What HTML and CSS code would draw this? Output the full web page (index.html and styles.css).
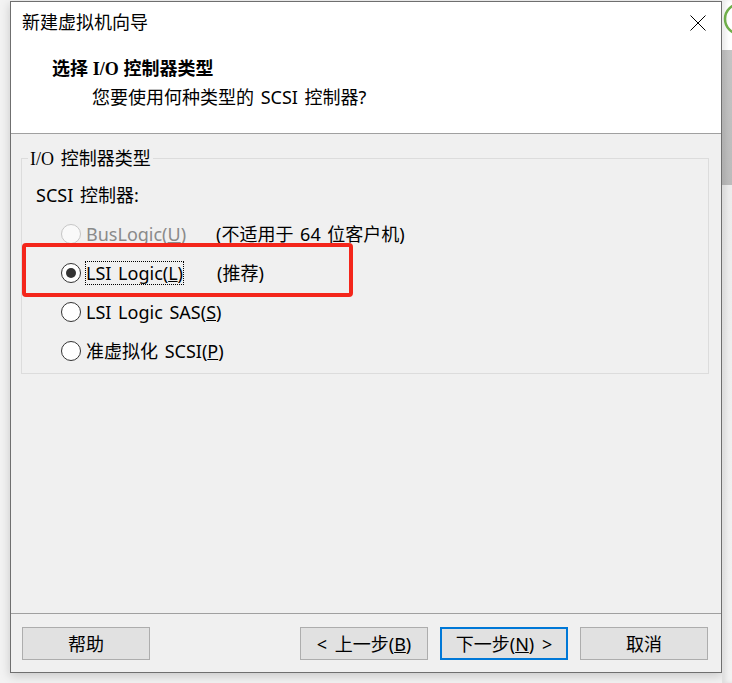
FILE: index.html
```html
<!DOCTYPE html>
<html lang="zh-CN">
<head>
<meta charset="utf-8">
<title>新建虚拟机向导</title>
<link rel="stylesheet" href="styles.css">
</head>
<body>
<div class="screen">
  <div class="gutter"></div>
  <div class="window">
    <header class="header">
      <div class="titlebar">
        <span class="title">新建虚拟机向导</span>
        <svg class="close" width="16" height="16" viewBox="0 0 16 16"><path d="M0.5 0.5 L15.5 15.5 M15.5 0.5 L0.5 15.5" stroke="#000" stroke-width="1" fill="none"/></svg>
      </div>
      <h1 class="heading">选择 <span class="serif">I/O</span> 控制器类型</h1>
      <p class="subtitle">您要使用何种类型的 SCSI 控制器?</p>
    </header>
    <main class="content">
      <fieldset class="group">
        <legend class="group-title"><span class="serif">I/O</span> 控制器类型</legend>
        <div class="group-label">SCSI 控制器:</div>
        <div class="options">
          <div class="option disabled"><span class="radio"></span><span class="opt-label">BusLogic(<u>U</u>)</span><span class="note">(不适用于 64 位客户机)</span></div>
          <div class="option"><span class="radio checked"></span><span class="opt-label focused">LSI Logic(<u>L</u>)</span><span class="note">(推荐)</span></div>
          <div class="option"><span class="radio"></span><span class="opt-label">LSI Logic SAS(<u>S</u>)</span></div>
          <div class="option"><span class="radio"></span><span class="opt-label">准虚拟化 SCSI(<u>P</u>)</span></div>
        </div>
      </fieldset>
      <div class="highlight"></div>
    </main>
    <footer class="footer">
      <button class="btn">帮助</button>
      <div class="spacer"></div>
      <div class="nav">
        <button class="btn">&lt; 上一步(<u>B</u>)</button>
        <button class="btn default">下一步(<u>N</u>) &gt;</button>
        <button class="btn">取消</button>
      </div>
    </footer>
  </div>
  <div class="side">
    <svg class="ring" width="10" height="40" viewBox="0 0 10 40"><circle cx="18" cy="19" r="15" stroke="#6fae4a" stroke-width="2.5" fill="none"/></svg>
  </div>
</div>
</body>
</html>
```
FILE: styles.css
```css
html, body {
  margin: 0;
  padding: 0;
  background: #f3f3f3;
}
body {
  font-family: "Noto Sans", "Noto Sans CJK SC", sans-serif;
  font-size: 18px;
  color: #000;
  word-spacing: 2px;
}
.screen {
  display: flex;
  height: 683px;
  overflow: hidden;
}
.gutter {
  width: 10px;
  flex: none;
}
.window {
  width: 712px;
  height: 672px;
  margin-top: 1px;
  box-sizing: border-box;
  border: 1px solid #6f6f6f;
  background: #f0f0f0;
  display: flex;
  flex-direction: column;
  flex: none;
  box-shadow: 0 3px 10px rgba(0,0,0,0.18);
}
.header {
  background: #fff;
  height: 131px;
  border-bottom: 1px solid #a0a0a0;
  flex: none;
}
.titlebar {
  height: 41px;
  display: flex;
  align-items: center;
  justify-content: space-between;
  padding-left: 11px;
  padding-right: 15px;
}
.title {
  font-family: "Noto Sans CJK SC", sans-serif;
  font-size: 18px;
  line-height: 24px;
  margin-bottom: 3px;
}
.close {
  display: block;
  margin-top: 1px;
}
.serif {
  font-family: "Liberation Serif", "Noto Sans CJK SC", serif;
}
.heading {
  margin: 13px 0 0 41px;
  font-size: 18px;
  font-weight: 700;
  line-height: 24px;
  word-spacing: 0;
}
.subtitle {
  margin: 4px 0 0 81px;
  line-height: 24px;
}
.content {
  flex: 1;
  position: relative;
}
.group {
  margin: 14px 12px 0 10px;
  padding: 0 0 3px 0;
  border: 1px solid #dcdcdc;
  min-width: 0;
}
.group-title {
  margin-left: 6px;
  padding: 0 2px;
  line-height: 20px;
}
.group-label {
  margin: 15px 0 0 14px;
  line-height: 22px;
}
.options {
  margin-top: 8px;
  display: flex;
  flex-direction: column;
}
.option {
  height: 39px;
  display: flex;
  align-items: center;
  padding-left: 39px;
}
.radio {
  width: 20px;
  height: 20px;
  box-sizing: border-box;
  border: 1px solid #333;
  border-radius: 50%;
  background: #fff;
  margin-right: 4px;
  display: flex;
  align-items: center;
  justify-content: center;
  flex: none;
}
.radio.checked::after {
  content: "";
  width: 10px;
  height: 10px;
  border-radius: 50%;
  background: #333;
}
.opt-label {
  min-width: 131px;
  box-sizing: border-box;
  border: 1px dotted transparent;
  line-height: 22px;
  white-space: nowrap;
}
.opt-label.focused {
  border-color: #000;
  min-width: 0;
  margin-right: 33px;
}
.note {
  line-height: 22px;
  white-space: nowrap;
}
.disabled .radio {
  border-color: #c6c6c6;
  background: #f9f9f9;
}
.disabled .opt-label {
  color: #8a8a8a;
}
.highlight {
  position: absolute;
  left: 11px;
  top: 109px;
  width: 331px;
  height: 54px;
  box-sizing: border-box;
  border: 4px solid #f4261b;
  border-radius: 4px;
}
.footer {
  height: 45px;
  border-top: 1px solid #a0a0a0;
  display: flex;
  align-items: flex-start;
  padding: 13px 13px 0 11px;
  flex: none;
}
.spacer {
  flex: 1;
}
.nav {
  display: flex;
  gap: 12px;
}
.btn {
  width: 128px;
  height: 33px;
  box-sizing: border-box;
  border: 1px solid #adadad;
  background: #e1e1e1;
  font-family: "Noto Sans", "Noto Sans CJK SC", sans-serif;
  font-size: 18px;
  word-spacing: 3px;
  color: #000;
  padding: 0;
  line-height: 22px;
}
.btn.default {
  border: 2px solid #0078d7;
}
.side {
  flex: 1;
  background: linear-gradient(to bottom, #ffffff 0, #ffffff 50px, #c4c4c4 50px, #bbbbbb 185px, #ececec 185px, #f2f2f2 100%);
  box-shadow: inset 4px 0 4px rgba(0,0,0,0.08);
}
.ring {
  display: block;
  margin-top: 0;
}
```
